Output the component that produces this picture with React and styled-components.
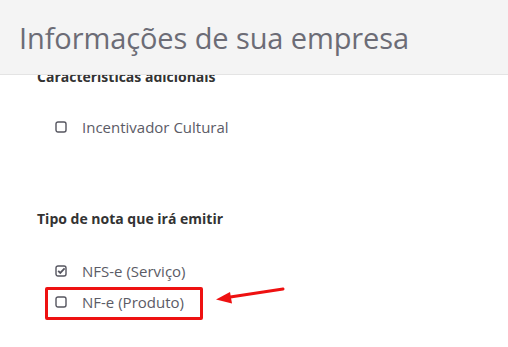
import React from 'react';
import styled, { createGlobalStyle } from 'styled-components';

const GlobalStyle = createGlobalStyle`
    html, body {
        margin: 0;
        padding: 0;
        background: #fff;
        font-family: "Open Sans", "Noto Sans", sans-serif;
        overflow: hidden;
    }
`

const Page = styled.div`
    position: relative;
    width: 508px;
    height: 347px;
    overflow: hidden;
`

const Header = styled.header`
    position: absolute;
    top: 0;
    left: 0;
    right: 0;
    height: 74px;
    background: #f4f4f4;
    border-bottom: 1px solid #e4e4e4;
    display: flex;
    align-items: center;
    padding-left: 19px;
    z-index: 2;
`

const Title = styled.h1`
    margin: 0;
    font-size: 29px;
    font-weight: 400;
    color: #6c6c76;
    letter-spacing: -0.1px;
`

const Content = styled.div`
    padding: 67px 0 0 37px;
    display: flex;
    flex-direction: column;
`

const SectionTitle = styled.h3`
    margin: 0;
    font-size: 14px;
    font-weight: 700;
    color: #333;
    line-height: 20px;
`

const OptionList = styled.div`
    display: flex;
    flex-direction: column;
    gap: 11px;
    margin-top: ${p => p.$top}px;
    margin-bottom: ${p => p.$bottom || 0}px;
`

const Option = styled.label`
    position: relative;
    display: flex;
    align-items: center;
    gap: 15px;
    padding-left: 18px;
    font-size: 15px;
    color: #5b5b66;
    line-height: 20px;
`

const Highlight = styled.span`
    position: absolute;
    left: 8px;
    top: -5px;
    width: 152px;
    height: 27px;
    border: 3px solid #ee1111;
    border-radius: 2px;
`

const Arrow = styled.svg`
    position: absolute;
    left: 176px;
    top: -7px;
`

const Box = ({ checked }) => (
    <svg width="12" height="12" viewBox="0 0 12 12">
        <rect x="1" y="1" width="10" height="10" rx="2" fill="none" stroke="#55555f" strokeWidth="1.4" />
        {checked && <path d="M3.2 5.8 L5.3 7.9 L9.6 3.4" fill="none" stroke="#55555f" strokeWidth="1.8" />}
    </svg>
)

const App = () => {
    return (
        <Page>
            <GlobalStyle />
            <Header>
                <Title>Informações de sua empresa</Title>
            </Header>
            <Content>
                <SectionTitle>Características adicionais</SectionTitle>
                <OptionList $top={30} $bottom={72}>
                    <Option><Box /> Incentivador Cultural</Option>
                </OptionList>
                <SectionTitle>Tipo de nota que irá emitir</SectionTitle>
                <OptionList $top={32}>
                    <Option><Box checked /> NFS-e (Serviço)</Option>
                    <Option>
                        <Box /> NF-e (Produto)
                        <Highlight />
                        <Arrow width="76" height="24" viewBox="0 0 76 24">
                            <path d="M70 4 L14 12.5" stroke="#ee1111" strokeWidth="3" strokeLinecap="round" />
                            <path d="M3 14.5 L17 7 L19 18.5 Z" fill="#ee1111" />
                        </Arrow>
                    </Option>
                </OptionList>
            </Content>
        </Page>
    );
}

export default App;
